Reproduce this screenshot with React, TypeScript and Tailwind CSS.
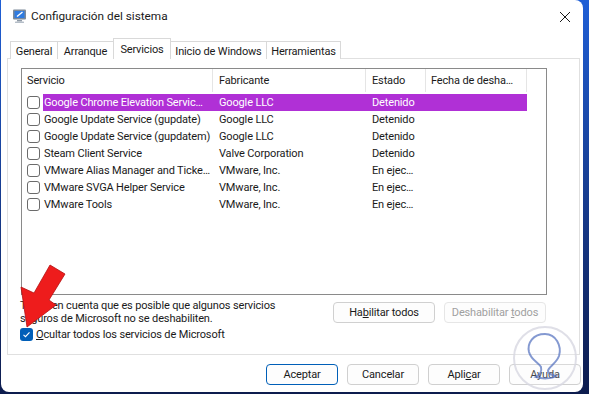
import React from 'react';

type Row = { name: string; maker: string; state: string; selected?: boolean };

const rows: Row[] = [
  { name: 'Google Chrome Elevation Servic…', maker: 'Google LLC', state: 'Detenido', selected: true },
  { name: 'Google Update Service (gupdate)', maker: 'Google LLC', state: 'Detenido' },
  { name: 'Google Update Service (gupdatem)', maker: 'Google LLC', state: 'Detenido' },
  { name: 'Steam Client Service', maker: 'Valve Corporation', state: 'Detenido' },
  { name: 'VMware Alias Manager and Ticke…', maker: 'VMware, Inc.', state: 'En ejec…' },
  { name: 'VMware SVGA Helper Service', maker: 'VMware, Inc.', state: 'En ejec…' },
  { name: 'VMware Tools', maker: 'VMware, Inc.', state: 'En ejec…' },
];

const tabs = [
  { name: 'General', w: 'w-[48px]' },
  { name: 'Arranque', w: 'w-[57px]' },
  { name: 'Servicios', w: 'w-[58px]' },
  { name: 'Inicio de Windows', w: 'w-[97px]' },
  { name: 'Herramientas', w: 'w-[75px]' },
];

function SysIcon() {
  return (
    <svg width="16" height="16" viewBox="0 0 16 16">
      <rect x="1" y="1.5" width="13" height="10" rx="1" fill="#7d8a99" />
      <rect x="2.5" y="3" width="10" height="7" fill="#2f7be0" />
      <path d="M5 8.5 L10.5 4" stroke="#ffffff" strokeWidth="1.4" />
      <rect x="5" y="12" width="5" height="1.5" fill="#8f9aa6" />
      <rect x="3" y="13.5" width="9" height="1.5" rx="0.5" fill="#b5bec8" />
    </svg>
  );
}

function Box({ checked }: { checked?: boolean }) {
  if (checked) {
    return (
      <span className="flex h-[13px] w-[13px] shrink-0 items-center justify-center rounded-[3px] bg-[#005fb8]">
        <svg width="9" height="9" viewBox="0 0 9 9">
          <path d="M1.5 4.8 L3.5 6.7 L7.5 2.3" fill="none" stroke="#ffffff" strokeWidth="1.1" />
        </svg>
      </span>
    );
  }
  return <span className="h-[13px] w-[13px] shrink-0 rounded-[3px] border border-[#6b6b6b] bg-white" />;
}

function Btn({ children, w, primary, disabled }: { children: React.ReactNode; w: string; primary?: boolean; disabled?: boolean }) {
  return (
    <div
      className={`flex h-[21px] ${w} items-center justify-center whitespace-nowrap rounded-[4px] border bg-[#fdfdfd] ${
        primary ? 'border-[#005fb8]' : disabled ? 'border-[#e6e6e6] text-[#a0a0a0]' : 'border-[#d0d0d0]'
      }`}
    >
      {children}
    </div>
  );
}

export default function App() {
  return (
    <div
      className="relative h-[394px] w-[589px] overflow-hidden bg-gradient-to-b from-[#1f5fd6] to-[#0d1c4e] text-[11px] leading-[15px] tracking-[-0.15px] text-[#1a1a1a]"
      style={{ fontFamily: 'Roboto, "Liberation Sans", Arial, sans-serif' }}
    >
      <div className="ml-[1px] flex h-[392px] w-[582px] flex-col rounded-b-[8px] rounded-tr-[8px] bg-white">
        {/* title bar */}
        <div className="flex h-[38px] items-start pl-[11px] pr-[12px] pt-[8px]">
          <SysIcon />
          <span className="ml-[3px] mt-[1px] text-[11.8px] tracking-normal">Configuración del sistema</span>
          <svg className="ml-auto mt-[3px]" width="12" height="12" viewBox="0 0 12 12">
            <path d="M1 1 L11 11 M11 1 L1 11" stroke="#1a1a1a" strokeWidth="1" />
          </svg>
        </div>

        {/* tabs */}
        <div className="relative z-10 flex h-[21px] items-end pl-[9px]">
          {tabs.map((t, i) =>
            t.name === 'Servicios' ? (
              <div
                key={t.name}
                className={`-ml-[1px] flex h-[21px] ${t.w} justify-center whitespace-nowrap border border-b-0 border-[#d9d9d9] bg-white pt-[3px]`}
              >
                {t.name}
              </div>
            ) : (
              <div
                key={t.name}
                className={`${i === 0 ? '' : '-ml-[1px]'} flex h-[18px] ${t.w} items-center justify-center whitespace-nowrap border border-b-0 border-[#d9d9d9] bg-white pt-[2px]`}
              >
                {t.name}
              </div>
            )
          )}
        </div>

        {/* panel */}
        <div className="-mt-[1px] ml-[6px] flex h-[297px] w-[573px] flex-col border border-[#e0e0e0] pl-[12px] pt-[9px]">
          <div className="ml-[1px] h-[227px] w-[526px] border border-[#8a8a8a] bg-white">
            <div className="flex h-[23px] items-center whitespace-nowrap">
              <div className="flex h-full w-[191px] items-center border-r border-[#e5e5e5] pl-[5px]">Servicio</div>
              <div className="flex h-full w-[153px] items-center border-r border-[#e5e5e5] pl-[6px]">Fabricante</div>
              <div className="flex h-full w-[60px] items-center border-r border-[#e5e5e5] pl-[6px]">Estado</div>
              <div className="flex h-full w-[101px] items-center overflow-hidden border-r border-[#e5e5e5] pl-[5px]">
                Fecha de desha…
              </div>
            </div>
            <div className="mt-[2px]">
              {rows.map((r) => (
                <div key={r.name} className="flex h-[17px] items-center">
                  <div className="flex w-[21px] shrink-0 items-center pl-[5px]">
                    <Box />
                  </div>
                  <div
                    className={`flex h-full w-[484px] items-center whitespace-nowrap ${
                      r.selected ? 'bg-[#b030d6] text-white' : ''
                    }`}
                  >
                    <span className="w-[175px] shrink-0 overflow-hidden pl-[1px]">{r.name}</span>
                    <span className="w-[153px] shrink-0 overflow-hidden pl-[1px]">{r.maker}</span>
                    <span className="w-[60px] shrink-0 overflow-hidden pl-[1px]">{r.state}</span>
                  </div>
                </div>
              ))}
            </div>
          </div>

          <div className="flex">
            <div className="mt-[4px] w-[300px] whitespace-nowrap leading-[13px]">
              Tenga en cuenta que es posible que algunos servicios
              <br />
              seguros de Microsoft no se deshabiliten.
            </div>
            <div className="ml-[13px] mt-[7px] flex gap-[9px]">
              <Btn w="w-[102px]">
                Ha<span className="underline">b</span>ilitar todos
              </Btn>
              <Btn w="w-[102px]" disabled>
                Deshabilitar&nbsp;<span className="underline">t</span>odos
              </Btn>
            </div>
          </div>
          <div className="mt-[2px] flex items-center gap-[3px]">
            <Box checked />
            <span>
              <span className="underline">O</span>cultar todos los servicios de Microsoft
            </span>
          </div>
        </div>

        {/* bottom buttons */}
        <div className="mt-[9px] flex gap-[9px] pl-[265px]">
          <Btn w="w-[72px]" primary>Aceptar</Btn>
          <Btn w="w-[72px]">Cancelar</Btn>
          <Btn w="w-[72px]">
            Apli<span className="underline">c</span>ar
          </Btn>
          <Btn w="w-[72px]">Ayuda</Btn>
        </div>
      </div>

      {/* red arrow annotation */}
      <svg className="absolute left-0 top-0" width="80" height="340" viewBox="0 0 80 340">
        <polygon
          points="27,327 21,287 34,293 50,265 65,274 49,300 56,305"
          fill="#ee1c1c"
          stroke="#b40f0f"
          strokeWidth="0.8"
          strokeLinejoin="round"
        />
      </svg>

      {/* watermark */}
      <svg className="absolute left-[512px] top-[325px]" width="66" height="66" viewBox="0 0 66 66">
        <circle cx="33" cy="33" r="31" fill="rgba(255,255,255,0.2)" stroke="rgba(215,215,225,0.8)" strokeWidth="2" />
        <path
          d="M33 9 C21 9 15 18 17 27 C19 35 27 38 29 42 C30 46 28 50 24 52 C30 54 40 54 44 51 C40 50 36 49 36 46 C36 42 44 39 47 31 C50 21 44 9 33 9 Z"
          fill="none"
          stroke="rgba(80,110,190,0.7)"
          strokeWidth="2"
        />
      </svg>
    </div>
  );
}
